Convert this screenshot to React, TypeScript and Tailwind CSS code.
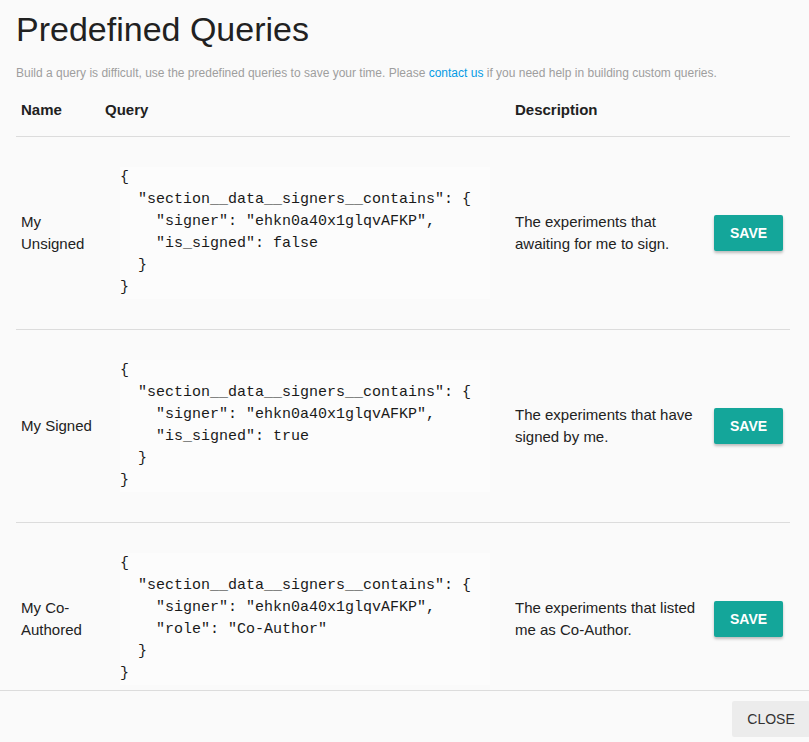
import React from "react";

type Row = { name: string; lines: string[]; desc: string };

const rows: Row[] = [
  {
    name: "My Unsigned",
    lines: [
      "{",
      '  "section__data__signers__contains": {',
      '    "signer": "ehkn0a40x1glqvAFKP",',
      '    "is_signed": false',
      "  }",
      "}",
    ],
    desc: "The experiments that awaiting for me to sign.",
  },
  {
    name: "My Signed",
    lines: [
      "{",
      '  "section__data__signers__contains": {',
      '    "signer": "ehkn0a40x1glqvAFKP",',
      '    "is_signed": true',
      "  }",
      "}",
    ],
    desc: "The experiments that have signed by me.",
  },
  {
    name: "My Co-Authored",
    lines: [
      "{",
      '  "section__data__signers__contains": {',
      '    "signer": "ehkn0a40x1glqvAFKP",',
      '    "role": "Co-Author"',
      "  }",
      "}",
    ],
    desc: "The experiments that listed me as Co-Author.",
  },
];

export default function App() {
  return (
    <div
      className="flex h-[742px] w-full flex-col overflow-hidden bg-[#fafafa] text-[#212121]"
      style={{ fontFamily: '"Liberation Sans", Arial, sans-serif' }}
    >
      <div className="h-[690px] overflow-hidden pl-4 pr-[19px]">
        <h1 className="mt-[11px] text-[34px] font-normal leading-[1.1] text-[#212121]">
          Predefined Queries
        </h1>
        <p className="mt-[16px] text-[12px] leading-[18px] text-[#9e9e9e]">
          Build a query is difficult, use the predefined queries to save your time. Please{" "}
          <a className="text-[#039be5]">contact us</a> if you need help in building custom queries.
        </p>
        <div className="mt-[2px]">
          <div className="grid grid-cols-[84px_410px_198px_82px] border-b border-[#dcdcdc] text-[15px] font-bold leading-[22px]">
            <div className="px-[5px] py-[15px]">Name</div>
            <div className="px-[5px] py-[15px]">Query</div>
            <div className="px-[5px] py-[15px]">Description</div>
            <div className="px-[5px] py-[15px]"></div>
          </div>
          {rows.map((r) => (
            <div
              key={r.name}
              className="grid grid-cols-[84px_410px_198px_82px] border-b border-[#dcdcdc] text-[15px] leading-[22px] text-[#222]"
            >
              <div className="flex items-center px-[5px] py-[15px]">{r.name}</div>
              <div className="px-[5px] py-[15px]">
                <pre
                  className="my-[15px] ml-[15px] w-[370px] bg-[#fcfcfc] text-[15px] leading-[22px] text-[#1a1a1a]"
                  style={{ fontFamily: '"Liberation Mono", "Courier New", monospace' }}
                >
                  {r.lines.join("\n")}
                </pre>
              </div>
              <div className="flex items-center px-[5px] py-[15px]">{r.desc}</div>
              <div className="flex items-center px-[5px] py-[15px]">
                <button className="ml-px h-[36px] rounded-[2px] bg-[#14a69a] px-[16px] text-[14px] font-bold uppercase text-white shadow-[0_2px_3px_rgba(0,0,0,0.25)]">
                  Save
                </button>
              </div>
            </div>
          ))}
        </div>
      </div>
      <div className="flex h-[52px] items-start justify-end border-t border-[#dcdcdc] pt-[10px]">
        <button className="-mr-px h-[36px] w-[78px] rounded-[2px] bg-[#ececec] text-[14px] uppercase text-[#333]">
          Close
        </button>
      </div>
    </div>
  );
}
